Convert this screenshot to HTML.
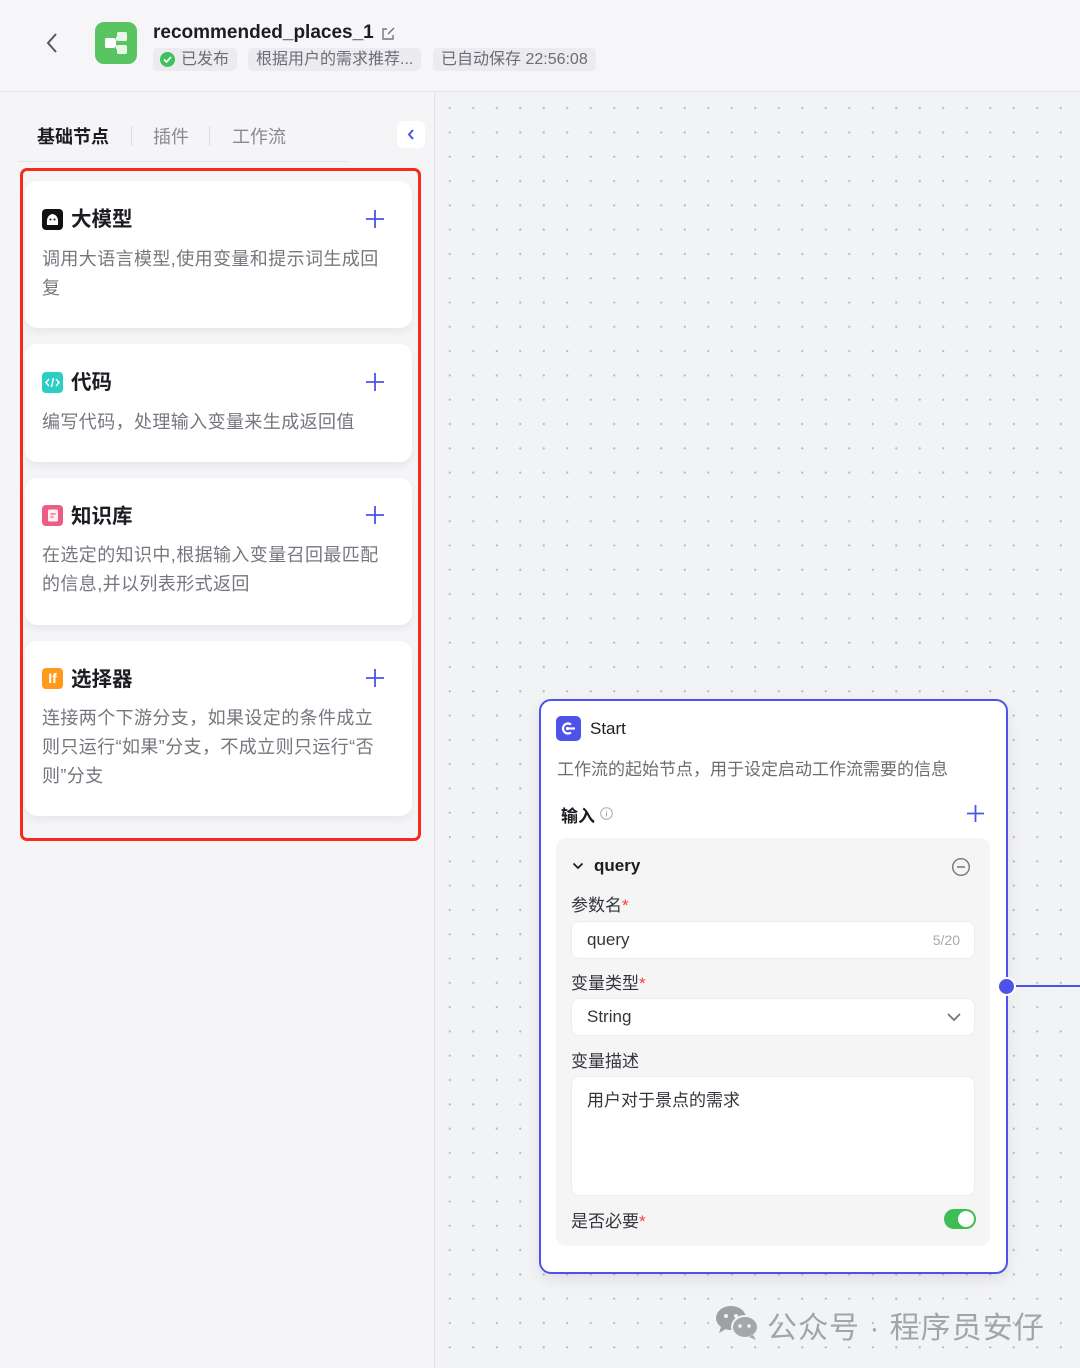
<!DOCTYPE html>
<html><head><meta charset="utf-8">
<style>
*{box-sizing:border-box;margin:0;padding:0}
body{width:1080px;height:1368px;overflow:hidden;background:#f5f5f7;font-family:"Liberation Sans","Noto Sans CJK SC",sans-serif;color:#1c1d23;position:relative}
.abs{position:absolute}
.hdr{left:0;top:0;width:1080px;height:92px;background:#f6f6f8;border-bottom:1px solid #e3e3e6}
.tag{position:absolute;top:48px;height:23px;background:#ececf0;border-radius:5px;font-size:16px;color:#6b6d75;line-height:23px;padding:0 8px;white-space:nowrap}
.canvas{left:434px;top:92px;width:646px;height:1276px;background-color:#f2f3f5;border-left:1px solid #e3e3e6;
background-image:radial-gradient(circle,#b8bac0 0.9px,transparent 1.3px);background-size:23.5px 24.3px;background-position:3px 4px}
.card{position:absolute;left:25px;width:387px;background:#fff;border-radius:12px;box-shadow:0 4px 8px rgba(0,0,0,0.06)}
.card .t{position:absolute;left:46px;font-size:20.5px;font-weight:bold;color:#1c1d23}
.card .ic{position:absolute;left:17px;width:21px;height:21px;border-radius:4px}
.card .plus{position:absolute;left:340px;width:20px;height:20px}
.card .d{position:absolute;left:17px;width:345px;font-size:18px;letter-spacing:0.4px;line-height:29px;color:#75777e}
.lbl{position:absolute;left:571px;font-size:17px;color:#33353b}
.lbl b{color:#f53f3f;font-weight:normal}
.inp{position:absolute;left:571px;width:404px;background:#fff;border:1px solid #ececef;border-radius:8px}
</style></head><body>
<div class="abs hdr">
  <svg class="abs" style="left:44px;top:32px" width="16" height="22" viewBox="0 0 16 22"><path d="M12 2 L4 11 L12 20" fill="none" stroke="#55575e" stroke-width="2"/></svg>
  <div class="abs" style="left:95px;top:22px;width:42px;height:42px;border-radius:9px;background:#5ac462">
    <svg width="42" height="42" viewBox="0 0 42 42"><rect x="10" y="16" width="10" height="10" rx="1.5" fill="#fff"/><rect x="22" y="10" width="10" height="9" rx="1.5" fill="#fff" opacity=".85"/><rect x="22" y="23" width="10" height="9" rx="1.5" fill="#fff" opacity=".85"/><path d="M20 21 L22 15 M20 21 L22 27" stroke="#fff" stroke-width="1.5"/></svg>
  </div>
  <div class="abs" style="left:153px;top:22px;font-size:19px;font-weight:bold;color:#1c1d23">recommended_places_1</div>
  <svg class="abs" style="left:380px;top:26px" width="16" height="16" viewBox="0 0 16 16"><path d="M7 3H3v10h10V9" fill="none" stroke="#777" stroke-width="1.4"/><path d="M8 8L14 2" stroke="#777" stroke-width="1.4"/></svg>
  <div class="tag" style="left:153px;padding-left:28px">已发布
    <svg class="abs" style="left:7px;top:4px" width="15" height="15" viewBox="0 0 15 15"><circle cx="7.5" cy="7.5" r="7.5" fill="#3ec25a"/><path d="M4 7.5l2.5 2.5 4.5-5" fill="none" stroke="#fff" stroke-width="1.8"/></svg></div>
  <div class="tag" style="left:248px">根据用户的需求推荐...</div>
  <div class="tag" style="left:433px">已自动保存 22:56:08</div>
</div>

<div class="abs" style="left:37px;top:123px;font-size:18px;font-weight:bold;color:#1c1d23">基础节点</div>
<div class="abs" style="left:131px;top:126px;width:1px;height:20px;background:#ddd"></div>
<div class="abs" style="left:153px;top:123px;font-size:18px;color:#888a91">插件</div>
<div class="abs" style="left:209px;top:126px;width:1px;height:20px;background:#ddd"></div>
<div class="abs" style="left:232px;top:123px;font-size:18px;color:#888a91">工作流</div>
<div class="abs" style="left:397px;top:121px;width:28px;height:27px;background:#fff;border-radius:6px">
  <svg width="28" height="27" viewBox="0 0 28 27"><path d="M16 9l-4 4.5 4 4.5" fill="none" stroke="#4d53e8" stroke-width="2"/></svg></div>
<div class="abs" style="left:18px;top:161px;width:330px;height:1px;background:#e4e4e7"></div>

<div class="abs" style="left:20px;top:168px;width:401px;height:673px;border:3px solid #f72b1c;border-radius:7px"></div>

<div class="card" style="top:181px;height:147px">
  <div class="ic" style="top:28px;background:#111"><svg width="21" height="21" viewBox="0 0 21 21"><path d="M5 16 Q4 6 10.5 5 Q17 6 16 16 Z" fill="#fff"/><circle cx="8.5" cy="10.5" r="1" fill="#111"/><circle cx="12.5" cy="10.5" r="1" fill="#111"/></svg></div>
  <div class="t" style="top:21px">大模型</div>
  <svg class="plus" style="top:28px" viewBox="0 0 20 20"><path d="M10 1v18M1 10h18" stroke="#4d53e8" stroke-width="1.8"/></svg>
  <div class="d" style="top:64px">调用大语言模型,使用变量和提示词生成回复</div>
</div>
<div class="card" style="top:344px;height:118px">
  <div class="ic" style="top:28px;background:#2ccdc2"><svg width="21" height="21" viewBox="0 0 21 21"><path d="M7 7l-3 3.5 3 3.5M14 7l3 3.5-3 3.5M11.5 6l-2 9" fill="none" stroke="#fff" stroke-width="1.5"/></svg></div>
  <div class="t" style="top:21px">代码</div>
  <svg class="plus" style="top:28px" viewBox="0 0 20 20"><path d="M10 1v18M1 10h18" stroke="#4d53e8" stroke-width="1.8"/></svg>
  <div class="d" style="top:64px">编写代码，处理输入变量来生成返回值</div>
</div>
<div class="card" style="top:478px;height:147px">
  <div class="ic" style="top:27px;background:#ec5c84"><svg width="21" height="21" viewBox="0 0 21 21"><rect x="6" y="4.5" width="10" height="12" rx="1.5" fill="#fff" opacity=".9"/><path d="M8.5 9h5M8.5 12h3" stroke="#ec5c84" stroke-width="1.3"/></svg></div>
  <div class="t" style="top:21px">知识库</div>
  <svg class="plus" style="top:27px" viewBox="0 0 20 20"><path d="M10 1v18M1 10h18" stroke="#4d53e8" stroke-width="1.8"/></svg>
  <div class="d" style="top:63px">在选定的知识中,根据输入变量召回最匹配的信息,并以列表形式返回</div>
</div>
<div class="card" style="top:641px;height:175px">
  <div class="ic" style="top:27px;background:#ff9a1a;color:#fff;font-size:14px;font-weight:bold;text-align:center;line-height:21px">If</div>
  <div class="t" style="top:21px">选择器</div>
  <svg class="plus" style="top:27px" viewBox="0 0 20 20"><path d="M10 1v18M1 10h18" stroke="#4d53e8" stroke-width="1.8"/></svg>
  <div class="d" style="top:63px">连接两个下游分支，如果设定的条件成立则只运行“如果”分支，不成立则只运行“否则”分支</div>
</div>

<div class="abs canvas"></div>
<div class="abs" style="left:1008px;top:985px;width:72px;height:2px;background:#4d53e8"></div>

<div class="abs" style="left:539px;top:699px;width:469px;height:575px;background:#fff;border:2.5px solid #4d53e8;border-radius:12px;box-shadow:0 6px 14px rgba(0,0,0,0.08)"></div>
<div class="abs" style="left:556px;top:716px;width:25px;height:25px;background:#4d53e8;border-radius:5px">
  <svg width="25" height="25" viewBox="0 0 25 25"><path d="M15 8.5 A5 5 0 1 0 15 16.5" fill="none" stroke="#fff" stroke-width="2.2"/><circle cx="11.5" cy="12.5" r="1.6" fill="#fff"/><path d="M12 12.5h7" stroke="#fff" stroke-width="2.2"/></svg></div>
<div class="abs" style="left:590px;top:719px;font-size:17px;color:#1c1d23">Start</div>
<div class="abs" style="left:557px;top:755px;font-size:17px;color:#6b6d75">工作流的起始节点，用于设定启动工作流需要的信息</div>
<div class="abs" style="left:561px;top:802px;font-size:17px;font-weight:bold;color:#1c1d23">输入</div>
<svg class="abs" style="left:600px;top:807px" width="13" height="13" viewBox="0 0 13 13"><circle cx="6.5" cy="6.5" r="5.8" fill="none" stroke="#aaa"/><path d="M6.5 5.5v4M6.5 3.5v1" stroke="#aaa"/></svg>
<svg class="abs" style="left:967px;top:805px" width="17" height="17" viewBox="0 0 17 17"><path d="M8.5 0v17M0 8.5h17" stroke="#4d53e8" stroke-width="1.8"/></svg>

<div class="abs" style="left:556px;top:838px;width:434px;height:408px;background:#f5f5f6;border-radius:10px"></div>
<svg class="abs" style="left:572px;top:861px" width="12" height="10" viewBox="0 0 12 10"><path d="M1.5 2.5l4.5 4.5 4.5-4.5" fill="none" stroke="#1c1d23" stroke-width="1.8"/></svg>
<div class="abs" style="left:594px;top:856px;font-size:17px;font-weight:bold;color:#1c1d23">query</div>
<svg class="abs" style="left:951px;top:857px" width="20" height="20" viewBox="0 0 20 20"><circle cx="10" cy="10" r="8.3" fill="none" stroke="#777" stroke-width="1.4"/><path d="M6 10h8" stroke="#777" stroke-width="1.5"/></svg>
<div class="lbl" style="top:891px">参数名<b>*</b></div>
<div class="inp" style="top:921px;height:38px"><span class="abs" style="left:15px;top:8px;font-size:17px;color:#33353b">query</span><span class="abs" style="right:14px;top:10px;font-size:14px;color:#a8aab0">5/20</span></div>
<div class="lbl" style="top:969px">变量类型<b>*</b></div>
<div class="inp" style="top:998px;height:38px"><span class="abs" style="left:15px;top:8px;font-size:17px;color:#33353b">String</span>
  <svg class="abs" style="right:12px;top:12px" width="16" height="12" viewBox="0 0 16 12"><path d="M2 3l6 6 6-6" fill="none" stroke="#777" stroke-width="1.8"/></svg></div>
<div class="lbl" style="top:1047px">变量描述</div>
<div class="inp" style="top:1076px;height:120px"><span class="abs" style="left:15px;top:9px;font-size:17px;color:#33353b">用户对于景点的需求</span></div>
<div class="lbl" style="top:1207px">是否必要<b>*</b></div>
<div class="abs" style="left:944px;top:1209px;width:32px;height:20px;background:#3ebd55;border-radius:10px"><div class="abs" style="left:14px;top:2px;width:16px;height:16px;border-radius:50%;background:#fff"></div></div>

<div class="abs" style="left:997px;top:977px;width:19px;height:19px;border-radius:50%;background:#4d53e8;border:2.5px solid #fff"></div>

<svg class="abs" style="left:715px;top:1305px" width="46" height="36" viewBox="0 0 46 36"><ellipse cx="16" cy="13" rx="15" ry="12" fill="#9fa0a3"/><path d="M6 22l-2 6 7-4z" fill="#9fa0a3"/><ellipse cx="30" cy="22" rx="13" ry="11" fill="#a6a7aa" stroke="#f2f3f5" stroke-width="2"/><path d="M38 30l3 5-7-3z" fill="#a6a7aa"/><circle cx="11" cy="11" r="2" fill="#f2f3f5"/><circle cx="21" cy="11" r="2" fill="#f2f3f5"/><circle cx="25" cy="21" r="1.8" fill="#f2f3f5"/><circle cx="34" cy="21" r="1.8" fill="#f2f3f5"/></svg>
<div class="abs" style="left:767px;top:1303px;font-size:30px;color:#a3a4a8;letter-spacing:1px">公众号 · 程序员安仔</div>
</body></html>
